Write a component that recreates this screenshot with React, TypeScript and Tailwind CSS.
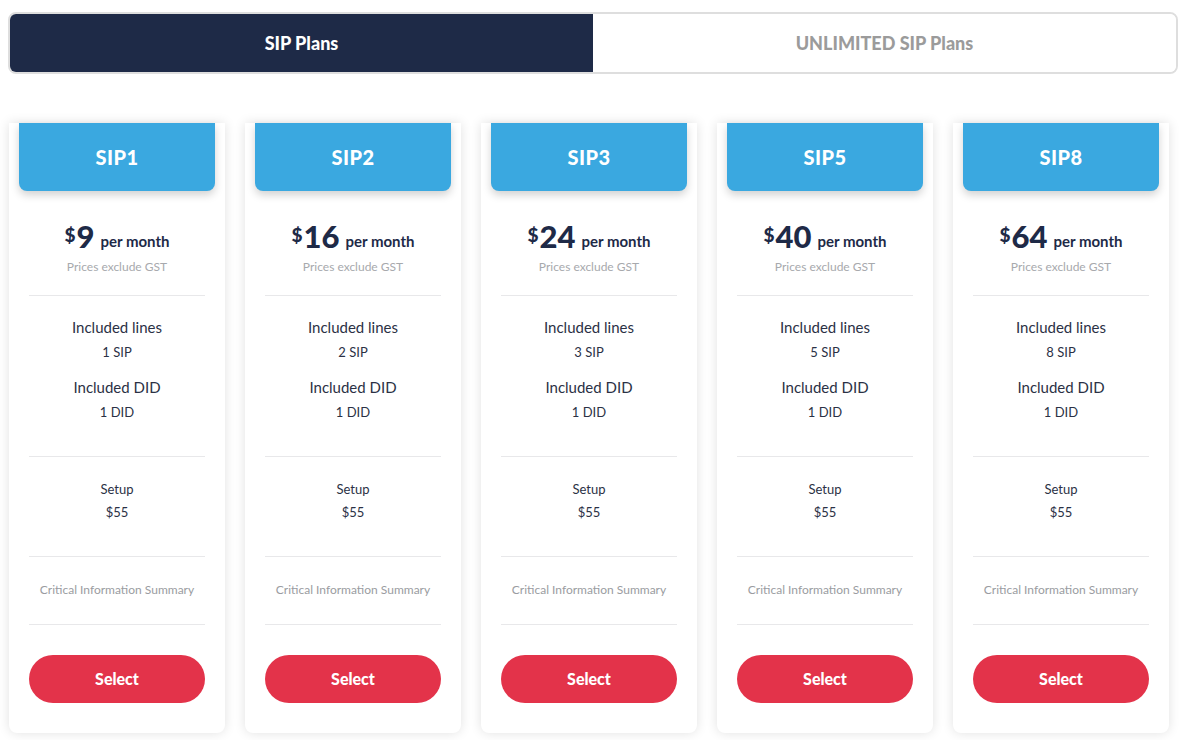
import React, { useState } from 'react';

type Plan = {
  name: string;
  price: number;
  lines: number;
  did: number;
  setup: number;
};

const plans: Plan[] = [
  { name: 'SIP1', price: 9, lines: 1, did: 1, setup: 55 },
  { name: 'SIP2', price: 16, lines: 2, did: 1, setup: 55 },
  { name: 'SIP3', price: 24, lines: 3, did: 1, setup: 55 },
  { name: 'SIP5', price: 40, lines: 5, did: 1, setup: 55 },
  { name: 'SIP8', price: 64, lines: 8, did: 1, setup: 55 },
];

const Divider = () => <div className="h-px bg-[#e8e8ea]" />;

const PlanCard = ({ plan }: { plan: Plan }) => (
  <div className="w-[216px] bg-white rounded-b-lg shadow-[0_0_12px_rgba(0,0,0,0.12)] flex flex-col">
    {/* Plan name banner */}
    <div className="mx-2.5 h-[68px] bg-[#3aa8e0] rounded-b-lg shadow-[0_4px_8px_rgba(0,0,0,0.18)] flex items-center justify-center">
      <span className="text-white text-[20px] font-black tracking-wide">{plan.name}</span>
    </div>

    <div className="px-5 flex flex-col text-center">
      {/* Price */}
      <div className="pt-[27px] pb-5">
        <div className="flex items-end justify-center text-[#1e2a47] h-9">
          <span className="text-[19px] font-black self-start mt-[3px] mr-px">$</span>
          <span className="text-[31px] leading-9 font-black">{plan.price}</span>
          <span className="text-[15px] font-bold ml-1.5 mb-[3px] leading-5">per month</span>
        </div>
        <p className="mt-[5px] text-[12px] leading-4 text-[#a7a9ad]">Prices exclude GST</p>
      </div>
      <Divider />

      {/* Inclusions */}
      <div className="pt-[21px] pb-[35px] text-[#2b3145]">
        <p className="text-[15px] leading-5">Included lines</p>
        <p className="mt-1.5 text-[13px] leading-[18px]">{plan.lines} SIP</p>
        <p className="mt-4 text-[15px] leading-5">Included DID</p>
        <p className="mt-1.5 text-[13px] leading-[18px]">{plan.did} DID</p>
      </div>
      <Divider />

      {/* Setup fee */}
      <div className="pt-[23px] pb-[35px] text-[#2b3145]">
        <p className="text-[13px] leading-[18px]">Setup</p>
        <p className="mt-[5px] text-[13px] leading-[18px]">${plan.setup}</p>
      </div>
      <Divider />

      <div className="pt-[25px] pb-[26px]">
        <a className="block text-[12px] leading-4 text-[#9a9ca1] cursor-pointer">Critical Information Summary</a>
      </div>
      <Divider />

      <div className="pt-[30px] pb-[30px]">
        <button className="w-full h-12 rounded-full bg-[#e3334a] text-white text-[16px] font-black">
          Select
        </button>
      </div>
    </div>
  </div>
);

export default function App() {
  const [tab, setTab] = useState<'sip' | 'unlimited'>('sip');

  return (
    <div className="w-[1186px] h-[740px] bg-white overflow-hidden font-['Lato',sans-serif]">
      {/* Plan type switcher */}
      <div className="mx-2 mt-3 h-[62px] flex border-2 border-[#dedede] rounded-lg overflow-hidden">
        <button
          onClick={() => setTab('sip')}
          className={`flex-1 text-[18px] font-black ${tab === 'sip' ? 'bg-[#1e2a47] text-white' : 'bg-white text-[#9b9b9b]'}`}
        >
          SIP Plans
        </button>
        <button
          onClick={() => setTab('unlimited')}
          className={`flex-1 text-[18px] font-black ${tab === 'unlimited' ? 'bg-[#1e2a47] text-white' : 'bg-white text-[#9b9b9b]'}`}
        >
          UNLIMITED SIP Plans
        </button>
      </div>

      {/* Plan cards */}
      <div className="ml-[9px] mt-[49px] flex gap-5">
        {plans.map((p) => (
          <PlanCard key={p.name} plan={p} />
        ))}
      </div>
    </div>
  );
}
